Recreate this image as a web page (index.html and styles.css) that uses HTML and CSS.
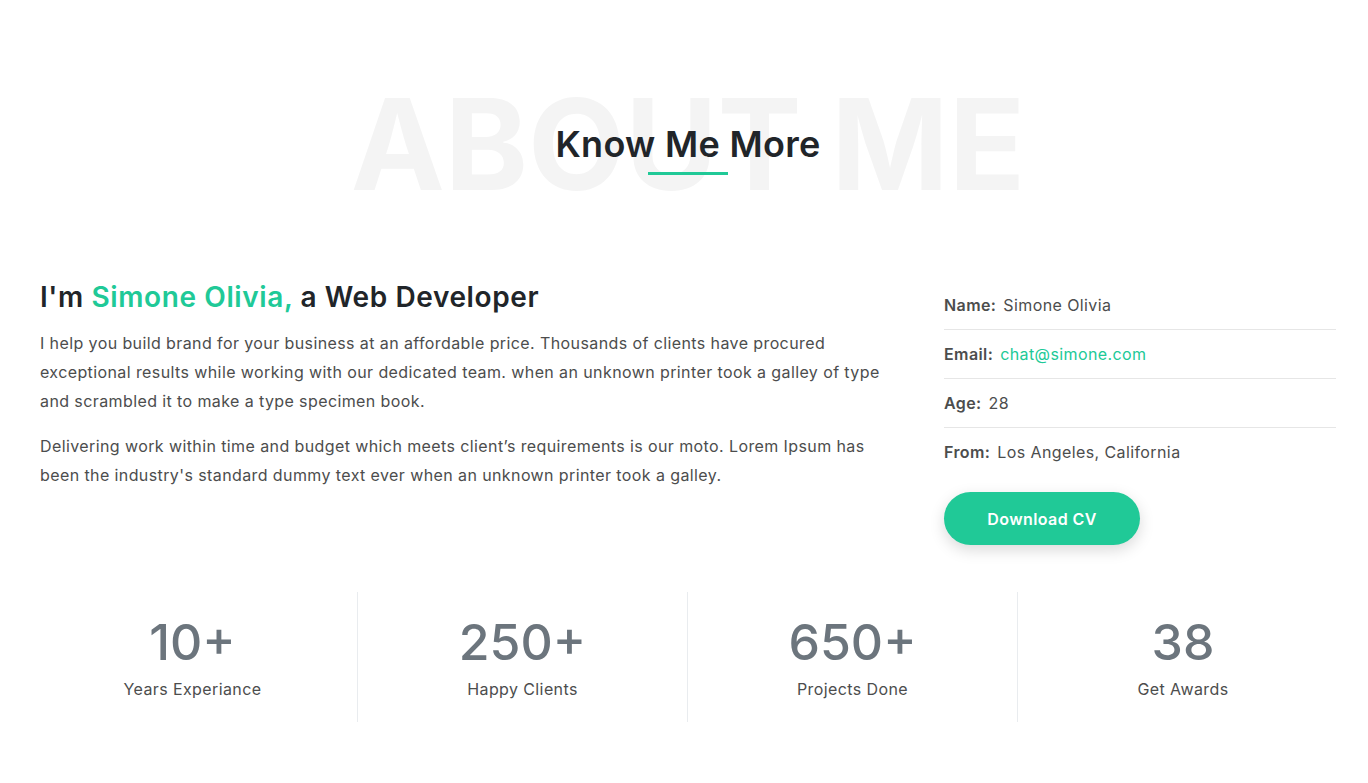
FILE: index.html
```html
<!DOCTYPE html>
<html lang="en">
<head>
<meta charset="utf-8">
<title>About Me</title>
<link rel="stylesheet" href="styles.css">
</head>
<body>
<section class="about">
  <div class="title-wrap">
    <p class="title-bg">ABOUT ME</p>
    <h2 class="title">Know Me More<span class="title-line"></span></h2>
  </div>

  <div class="about-row">
    <div class="about-text">
      <h3 class="intro">I'm <span class="accent">Simone Olivia,</span> a Web Developer</h3>
      <p>I help you build brand for your business at an affordable price. Thousands of clients have procured exceptional results while working with our dedicated team. when an unknown printer took a galley of type and scrambled it to make a type specimen book.</p>
      <p>Delivering work within time and budget which meets client’s requirements is our moto. Lorem Ipsum has been the industry's standard dummy text ever when an unknown printer took a galley.</p>
    </div>
    <div class="about-info">
      <ul class="info-list">
        <li><span class="label">Name:</span>Simone Olivia</li>
        <li><span class="label">Email:</span><a class="mail" href="#">chat@simone.com</a></li>
        <li><span class="label">Age:</span>28</li>
        <li><span class="label">From:</span>Los Angeles, California</li>
      </ul>
      <a class="btn" href="#">Download CV</a>
    </div>
  </div>

  <div class="stats">
    <div class="stat"><div class="num">10+</div><div class="stat-label">Years Experiance</div></div>
    <div class="stat"><div class="num">250+</div><div class="stat-label">Happy Clients</div></div>
    <div class="stat"><div class="num">650+</div><div class="stat-label">Projects Done</div></div>
    <div class="stat"><div class="num">38</div><div class="stat-label">Get Awards</div></div>
  </div>
</section>
</body>
</html>
```

FILE: styles.css
```css
* { box-sizing: border-box; }
html, body { margin: 0; padding: 0; background: #fff; }
body {
  font-family: "Inter", "Noto Sans", sans-serif;
  color: #4c4d4d;
  font-size: 16px;
  letter-spacing: 0.4px;
}
.about {
  padding: 81px 20px 60px 28px;
}
.title-wrap {
  display: grid;
  justify-items: center;
  align-items: center;
}
.title-bg, .title {
  grid-area: 1 / 1;
}
.title-bg {
  margin: 0;
  font-size: 126px;
  line-height: 1;
  font-weight: 700;
  color: #f4f4f4;
  white-space: nowrap;
  letter-spacing: 0;
}
.title {
  margin: 7px 0 0;
  font-size: 36px;
  font-weight: 600;
  line-height: 48px;
  color: #212529;
  text-align: center;
  letter-spacing: 0.3px;
}
.title-line {
  display: block;
  width: 80px;
  height: 3px;
  margin: 4px auto 0;
  background: #20c997;
}
.about-row {
  display: grid;
  grid-template-columns: 880px 440px;
  margin-top: 74px;
}
.about-text {
  padding: 0 12px;
}
.intro {
  margin: 0 0 14px;
  font-size: 28px;
  line-height: 1.2;
  font-weight: 600;
  color: #212529;
  letter-spacing: 0.6px;
}
.accent { color: #20c997; }
.about-text p {
  margin: 0 0 16px;
  line-height: 29px;
}
.about-info {
  padding: 0 12px 0 36px;
}
.info-list {
  list-style: none;
  margin: 0;
  padding: 0;
}
.info-list li {
  padding: 10px 0;
  line-height: 28px;
  border-bottom: 1px solid #e6e6e6;
}
.info-list li:last-child { border-bottom: 0; }
.label {
  font-weight: 600;
  color: #4c4d4d;
  margin-right: 7px;
}
.mail { color: #20c997; text-decoration: none; }
.btn {
  display: inline-flex;
  align-items: center;
  justify-content: center;
  width: 196px;
  height: 53px;
  margin-top: 16px;
  border-radius: 27px;
  background: #20c997;
  color: #fff;
  font-weight: 600;
  font-size: 16px;
  text-decoration: none;
  box-shadow: 0 5px 15px rgba(0,0,0,0.15);
}
.stats {
  display: grid;
  grid-template-columns: repeat(4, 330px);
  margin-top: 47px;
}
.stat {
  text-align: center;
  padding: 20px 0 21px;
  border-right: 1px solid #e9ecef;
}
.stat:last-child { border-right: 0; }
.num {
  font-size: 50px;
  font-weight: 500;
  line-height: 60px;
  color: #6c757d;
  letter-spacing: 0;
}
.stat-label {
  margin-top: 5px;
  line-height: 24px;
  color: #4c4d4d;
}
```
